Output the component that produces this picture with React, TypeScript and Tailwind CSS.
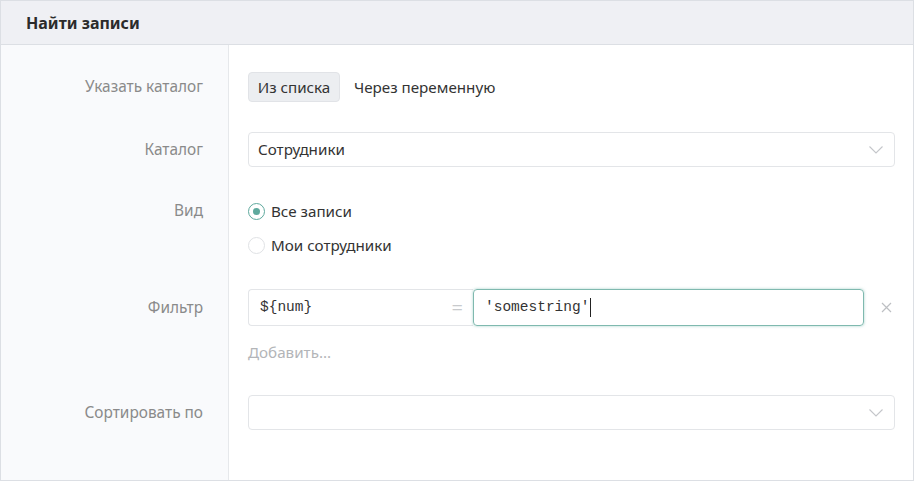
import React from "react";

function Chevron() {
  return (
    <svg width="16" height="10" viewBox="0 0 16 10" fill="none">
      <path d="M1.5 1.5 L8 8 L14.5 1.5" stroke="#c4c6ca" strokeWidth="1.1" />
    </svg>
  );
}

function Row({
  label,
  labelH,
  pt,
  children,
}: {
  label: string;
  labelH: number;
  pt: string;
  children: React.ReactNode;
}) {
  return (
    <div className="flex">
      <div className={`w-[228px] shrink-0 bg-[#f9fafc] border-r border-[#e6e8eb] pr-[25px] ${pt}`}>
        <div
          className="flex items-center justify-end text-[15.4px] text-[#8a8a8a]"
          style={{ height: labelH }}
        >
          {label}
        </div>
      </div>
      <div className={`flex-1 pl-[19px] pr-[18px] ${pt}`}>{children}</div>
    </div>
  );
}

export default function App() {
  return (
    <div
      className="w-[914px] h-[481px] border border-[#dcdfe4] flex flex-col bg-white text-[#333]"
      style={{ fontFamily: "'Noto Sans', 'Open Sans', sans-serif" }}
    >
      <div className="h-[44px] shrink-0 bg-[#eff0f4] border-b border-[#dcdfe4] flex items-center pl-[25px] text-[16px] font-bold text-[#2b2b2b]">
        Найти записи
      </div>
      <div className="flex-1 flex flex-col">
        <Row label="Указать каталог" labelH={30} pt="pt-[27px]">
          <div className="flex items-center h-[30px]">
            <div className="h-[30px] w-[92px] flex items-center justify-center bg-[#eceef1] border border-[#e1e3e7] rounded-[4px] text-[15.2px] text-[#333]">
              Из списка
            </div>
            <div className="ml-[14px] text-[15.2px] text-[#333]">Через переменную</div>
          </div>
        </Row>
        <Row label="Каталог" labelH={35} pt="pt-[30px]">
          <div className="h-[35px] border border-[#e3e5e8] rounded-[4px] flex items-center justify-between pl-[9px] pr-[10px] text-[15.2px] text-[#333]">
            <span>Сотрудники</span>
            <Chevron />
          </div>
        </Row>
        <Row label="Вид" labelH={34} pt="pt-[27px]">
          <div className="flex flex-col">
            <div className="h-[34px] flex items-center">
              <div className="w-[17px] h-[17px] rounded-full border border-[#5ea99d] flex items-center justify-center">
                <div className="w-[7px] h-[7px] rounded-full bg-[#5ea99d]" />
              </div>
              <span className="ml-[6px] text-[15.2px] text-[#333]">Все записи</span>
            </div>
            <div className="h-[35px] flex items-center">
              <div className="w-[17px] h-[17px] rounded-full border border-[#e0e2e5]" />
              <span className="ml-[6px] text-[15.2px] text-[#333]">Мои сотрудники</span>
            </div>
          </div>
        </Row>
        <Row label="Фильтр" labelH={37} pt="pt-[26px]">
          <div className="flex items-center">
            <div className="flex-1 flex items-center h-[37px]">
              <div className="w-[225px] h-[37px] border border-r-0 border-[#e3e5e8] rounded-l-[4px] flex items-center justify-between pl-[11px] pr-[10px]">
                <span
                  className="text-[14.5px] text-[#333]"
                  style={{ fontFamily: "'Liberation Mono', monospace" }}
                >
                  {"${num}"}
                </span>
                <span className="text-[20px] text-[#c8cacd] leading-none">=</span>
              </div>
              <div className="flex-1 h-[37px] border border-[#7fb9af] rounded-[4px] shadow-[0_0_3px_rgba(94,169,157,0.55)] flex items-center pl-[11px]">
                <span
                  className="text-[14.5px] text-[#333]"
                  style={{ fontFamily: "'Liberation Mono', monospace" }}
                >
                  'somestring'
                </span>
                <span className="w-px h-[19px] bg-[#222] ml-[1px]" />
              </div>
            </div>
            <div className="w-[31px] flex justify-end pr-[3px]">
              <svg width="11" height="11" viewBox="0 0 11 11">
                <path d="M1 1 L10 10 M10 1 L1 10" stroke="#bdbfc3" strokeWidth="1.2" />
              </svg>
            </div>
          </div>
          <div className="mt-[16px] h-[20px] flex items-center text-[15.2px] text-[#b3b5b8]">
            Добавить...
          </div>
        </Row>
        <Row label="Сортировать по" labelH={35} pt="pt-[33px]">
          <div className="h-[35px] border border-[#e3e5e8] rounded-[4px] flex items-center justify-end pr-[10px]">
            <Chevron />
          </div>
        </Row>
        <div className="flex flex-1">
          <div className="w-[228px] shrink-0 bg-[#f9fafc] border-r border-[#e6e8eb]" />
          <div className="flex-1" />
        </div>
      </div>
    </div>
  );
}
